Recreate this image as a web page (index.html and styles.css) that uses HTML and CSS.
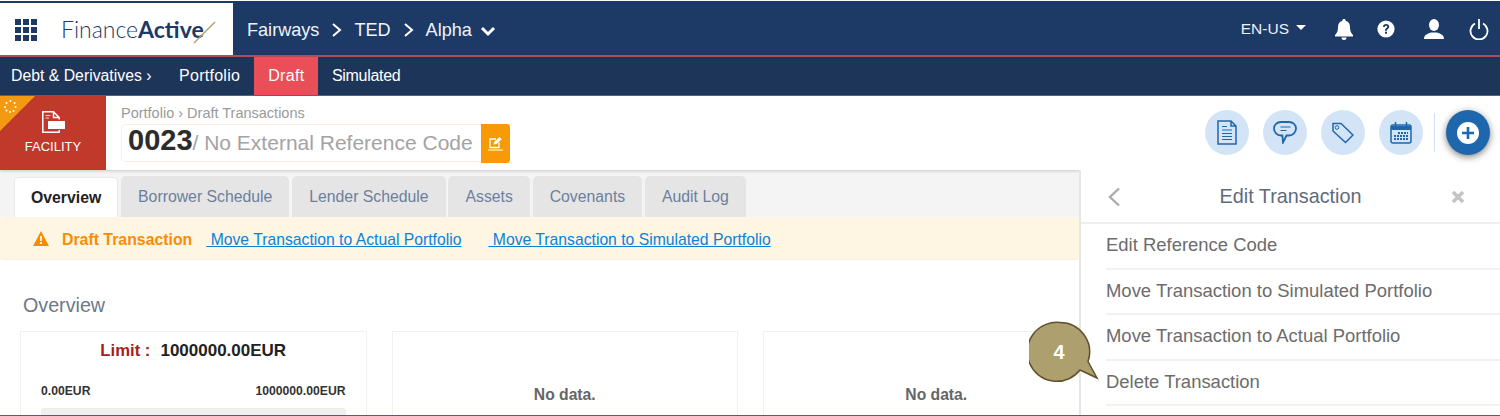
FILE: index.html
```html
<!DOCTYPE html>
<html lang="en">
<head>
<meta charset="utf-8">
<title>Edit Transaction</title>
<link rel="stylesheet" href="styles.css">
</head>
<body>
<div class="page">
  <header class="topbar">
    <div class="brand">
      <svg class="grid-icon" width="22" height="22" viewBox="0 0 22 22"><g fill="#1d3966"><rect x="0" y="0" width="6" height="6"/><rect x="8" y="0" width="6" height="6"/><rect x="16" y="0" width="6" height="6"/><rect x="0" y="8" width="6" height="6"/><rect x="8" y="8" width="6" height="6"/><rect x="16" y="8" width="6" height="6"/><rect x="0" y="16" width="6" height="6"/><rect x="8" y="16" width="6" height="6"/><rect x="16" y="16" width="6" height="6"/></g></svg>
      <div class="logo"><span class="logo-light">Finance</span><span class="logo-bold">Active</span><svg class="logo-slash" width="23" height="23" viewBox="0 0 23 23"><path d="M1 22 L22 1" stroke="#b3a26f" stroke-width="1.4" fill="none"/></svg></div>
    </div>
    <nav class="crumbs">
      <span>Fairways</span>
      <svg class="chev" width="11" height="16" viewBox="0 0 11 16"><path d="M2 2l7 6-7 6" fill="none" stroke="#fff" stroke-width="2"/></svg>
      <span>TED</span>
      <svg class="chev" width="11" height="16" viewBox="0 0 11 16"><path d="M2 2l7 6-7 6" fill="none" stroke="#fff" stroke-width="2"/></svg>
      <span>Alpha</span>
      <svg class="chev-down" width="16" height="11" viewBox="0 0 16 11"><path d="M2 2l6 6 6-6" fill="none" stroke="#fff" stroke-width="3"/></svg>
    </nav>
    <div class="top-actions">
      <span class="lang">EN-US</span>
      <svg class="caret" width="10" height="5" viewBox="0 0 10 5"><path d="M0 0h10L5 5z" fill="#fff"/></svg>
      <svg class="ta bell" width="20" height="21" viewBox="0 0 20 21"><path d="M10 0c1 0 1.700.7 1.700 1.700 3 .8 4.300 3.300 4.300 6.300 0 4 1 6 3 8v1.500H1V16c2-2 3-4 3-8 0-3 1.300-5.500 4.300-6.300C8.300.7 9 0 10 0z M7.500 18.500h5a2.500 2.500 0 0 1-5 0z" fill="#fff"/></svg>
      <svg class="ta help" width="18" height="18" viewBox="0 0 18 18"><circle cx="9" cy="9" r="8.600" fill="#fff"/><path d="M6 7c0-2 1.300-3 3.100-3S12.200 5 12.200 6.700c0 2.200-2.400 2.300-2.400 4H8v-.5c0-2.200 2.200-2.300 2.200-3.500 0-.6-.4-1-1.100-1-.7 0-1.200.4-1.200 1.300z" fill="#1d3966"/><rect x="8" y="11.700" width="2" height="2" fill="#1d3966"/></svg>
      <svg class="ta user" width="20" height="20" viewBox="0 0 20 20"><ellipse cx="10" cy="6" rx="5" ry="6" fill="#fff"/><path d="M0 20c0-4 3-5 7-6.500h6C17 15 20 16 20 20z" fill="#fff"/></svg>
      <svg class="ta power" width="20" height="21" viewBox="0 0 20 21"><path d="M6 4.500a8.500 8.500 0 1 0 8 0" fill="none" stroke="#fff" stroke-width="1.800"/><path d="M10 0v10" stroke="#fff" stroke-width="1.800"/></svg>
    </div>
  </header>

  <nav class="subnav">
    <span class="sub-root">Debt &amp; Derivatives &rsaquo;</span>
    <span class="sub-item sub-portfolio">Portfolio</span>
    <span class="sub-item sub-active">Draft</span>
    <span class="sub-item sub-simulated">Simulated</span>
  </nav>

  <section class="head">
    <div class="badge">
      <svg class="corner" width="35" height="35" viewBox="0 0 35 35"><path d="M0 0h35L0 35z" fill="#f49a12"/><g fill="#fff"><circle cx="10.500" cy="5" r="1"/><circle cx="14.500" cy="7" r="1"/><circle cx="15.500" cy="11" r="1"/><circle cx="13.500" cy="15" r="1"/><circle cx="10" cy="16" r="1"/><circle cx="6.500" cy="14.500" r="1"/><circle cx="5" cy="11" r="1"/><circle cx="6.500" cy="7" r="1"/></g></svg>
      <svg class="badge-icon" width="24" height="24" viewBox="0 0 24 24"><path d="M1.800 1.800h10.700l5.700 5.700v14.700H1.800z M12.500 1.800v5.700h5.700" fill="none" stroke="#fff" stroke-width="1.500"/><path d="M4.500 5.500h5M4.500 8h3.500" stroke="#fff" stroke-width=".8"/><rect x="5.500" y="9.500" width="18.500" height="10.500" fill="#c0392b"/><rect x="7" y="11" width="17" height="8" fill="#fff"/></svg>
      <span class="badge-label">FACILITY</span>
    </div>
    <div class="head-main">
      <div class="breadcrumb">Portfolio &rsaquo; Draft Transactions</div>
      <div class="ref-row">
        <div class="ref-box"><b class="ref-num">0023</b><span class="ref-text">/ No External Reference Code</span></div>
        <div class="ref-edit"><svg width="15" height="15" viewBox="0 0 15 15"><path d="M11 6.500V11.500H2V3h6" fill="none" stroke="#fff" stroke-width="1.300"/><path d="M5.500 8.500l.6-2.500L11.500 1 13.800 3.200 8.500 8z" fill="#fff"/><path d="M0 14h15" stroke="#fff" stroke-width="1"/></svg></div>
      </div>
    </div>
    <div class="head-actions">
      <span class="round"><svg width="20" height="25" viewBox="0 0 20 25"><path d="M1 1h13l5 5v18H1z M14 1v5h5" fill="none" stroke="#1e67ad" stroke-width="1.500"/><path d="M5 10h10M5 13.500h10M5 16.500h10M5 19.500h10M5 6.500h5" stroke="#1e67ad" stroke-width="1.200"/></svg></span>
      <span class="round"><svg width="24" height="23" viewBox="0 0 24 23"><path d="M8 1h8c4 0 7 2.800 7 6.500S20 14.500 16 14.500h-2.500L10 21.500l-.6-7H8c-4 0-7-3.300-7-7S4 1 8 1z" fill="none" stroke="#1e67ad" stroke-width="1.800"/><path d="M7.500 6h10M7.500 9.500h6" stroke="#1e67ad" stroke-width="1.200"/></svg></span>
      <span class="round"><svg width="22" height="22" viewBox="0 0 22 22"><path d="M1 1.500h8L21 13l-7.500 7.500L1 9z" fill="none" stroke="#1e67ad" stroke-width="1.500"/><circle cx="5" cy="5.500" r="1.800" fill="none" stroke="#1e67ad" stroke-width="1"/></svg></span>
      <span class="round"><svg width="22" height="22" viewBox="0 0 22 22"><rect x="1" y="3" width="20" height="18" rx="2" fill="none" stroke="#1e67ad" stroke-width="1.500"/><path d="M1 4h20v4H1z" fill="#1e67ad"/><path d="M5.500 0v5M16.500 0v5" stroke="#1e67ad" stroke-width="1.500"/><path d="M8 11h10M4 14h14M4 17h14" stroke="#1e67ad" stroke-width="2" stroke-dasharray="2 1"/></svg></span>
      <span class="divider"></span>
      <span class="plus"><svg width="22" height="22" viewBox="0 0 22 22"><circle cx="11" cy="11" r="11" fill="#fff"/><path d="M11 5v12M5 11h12" stroke="#1e67ad" stroke-width="2.600"/></svg></span>
    </div>
  </section>

  <div class="body">
    <main class="content">
      <div class="tabs">
        <span class="tab tab-active">Overview</span>
        <span class="tab">Borrower Schedule</span>
        <span class="tab">Lender Schedule</span>
        <span class="tab">Assets</span>
        <span class="tab">Covenants</span>
        <span class="tab">Audit Log</span>
      </div>
      <div class="alert">
        <svg class="warn" width="16" height="15" viewBox="0 0 16 15"><path d="M8 0l8 15H0z" fill="#fb8c00"/><rect x="7" y="5" width="2" height="5" fill="#fff7e6"/><rect x="7" y="11" width="2" height="2" fill="#fff7e6"/></svg>
        <b class="alert-title">Draft Transaction</b>
        <a class="alert-link" href="#">&nbsp;Move Transaction to Actual Portfolio</a>
        <a class="alert-link" href="#">&nbsp;Move Transaction to Simulated Portfolio</a>
      </div>
      <h2 class="section-title">Overview</h2>
      <div class="cards">
        <div class="card">
          <div class="limit"><span class="limit-label">Limit :</span><b>1000000.00EUR</b></div>
          <div class="limit-range"><span>0.00EUR</span><span>1000000.00EUR</span></div>
          <div class="bar"></div>
        </div>
        <div class="card card-empty">No data.</div>
        <div class="card card-empty">No data.</div>
      </div>
    </main>
    <aside class="panel">
      <div class="panel-head">
        <svg width="13" height="20" viewBox="0 0 13 20"><path d="M11 1.500L2 10l9 8.500" fill="none" stroke="#a9acb0" stroke-width="2.400"/></svg>
        <span class="panel-title">Edit Transaction</span>
        <svg width="14" height="14" viewBox="0 0 14 14"><path d="M2 2l10 10M12 2L2 12" stroke="#c4c4c4" stroke-width="3.600"/></svg>
      </div>
      <ul class="panel-list">
        <li>Edit Reference Code</li>
        <li>Move Transaction to Simulated Portfolio</li>
        <li>Move Transaction to Actual Portfolio</li>
        <li>Delete Transaction</li>
      </ul>
    </aside>
  </div>

  <div class="callout">
    <svg width="72" height="64" viewBox="0 0 72 64"><path d="M31 1.500a29.500 29.500 0 0 1 28 39l9 16.500-17-8A29.500 29.500 0 1 1 31 1.500z" fill="#ae9f6e" stroke="#5e522d" stroke-width="1.500"/></svg>
    <span class="callout-num">4</span>
  </div>
  <div class="bottom-line"></div>
</div>
</body>
</html>
```
FILE: styles.css
```css
* { box-sizing: border-box; }
html, body { margin: 0; padding: 0; height: 100%; overflow: hidden; background: #fff; }
body { font-family: "Liberation Sans", Arial, sans-serif; }
.page { position: relative; width: 1500px; height: 416px; overflow: hidden; display: flex; flex-direction: column; }

.topbar { height: 56px; margin-top: 1px; flex: none; display: flex; align-items: stretch; background: #1d3966; border-top: 2px solid #1d3966; border-bottom: 2px solid #b04c5c; color: #fff; }
.brand { width: 233px; background: #fff; display: flex; align-items: center; padding-left: 15px; flex: none; }
.grid-icon { flex: none; margin-top: 1px; }
.logo { margin-left: 24px; display: flex; align-items: center; font-family: Lato, "Liberation Sans", sans-serif; font-size: 23px; color: #1d3966; white-space: nowrap; }
.logo-light { font-weight: 300; }
.logo-bold { font-weight: 700; }
.logo-slash { margin-left: -11px; margin-top: 6px; }
.crumbs { display: flex; align-items: center; gap: 12px; margin-left: 14px; padding-top: 2px; font-size: 18.100px; color: #f0f3f7; }
.chev-down { margin-left: -4px; margin-top: 3px; }
.top-actions { margin-left: auto; display: flex; align-items: center; padding-right: 11px; }
.lang { font-size: 15.500px; color: #eef1f5; }
.caret { margin-left: 7px; margin-bottom: 3px; }
.ta { display: block; }
.bell { margin-left: 28px; }
.help { margin-left: 23px; }
.user { margin-left: 29px; }
.power { margin-left: 25px; }

.subnav { height: 39px; flex: none; display: flex; align-items: stretch; background: #1d3559; color: #fff; font-size: 16px; border-bottom: 1px solid #54698a; }
.sub-root { display: flex; align-items: center; padding-left: 11px; width: 165px; font-size: 15.800px; }
.sub-item { display: flex; align-items: center; padding: 0 14px; }
.sub-portfolio { letter-spacing: .28px; }
.sub-active { background: #ea4e58; letter-spacing: .3px; }
.sub-simulated { letter-spacing: -.3px; padding-left: 13.500px; }

.head { height: 74px; flex: none; display: flex; background: #fff; position: relative; z-index: 1; box-shadow: 0 1px 3px rgba(0,0,0,.18); }
.badge { width: 106px; flex: none; background: #c0392b; position: relative; display: flex; flex-direction: column; align-items: center; color: #fff; padding-top: 14px; }
.corner { position: absolute; left: 0; top: 0; }
.badge-label { font-size: 13px; margin-top: 5px; }
.head-main { margin-left: 15px; padding-top: 9px; }
.breadcrumb { font-size: 14.500px; color: #9a9a9a; line-height: 16px; }
.ref-row { display: flex; align-items: flex-start; margin-top: 3px; }
.ref-box { width: 360px; height: 38px; border: 1px solid #f6f1e2; border-right: 0; border-radius: 5px 0 0 5px; padding: 0 0 5px 6px; display: flex; align-items: center; white-space: nowrap; }
.ref-num { font-size: 29px; color: #2c2c2c; }
.ref-text { font-size: 21px; color: #a3a3a3; margin-top: 4px; }
.ref-edit { width: 29px; height: 39px; background: #f89a06; border-radius: 0 3px 3px 0; display: flex; align-items: center; justify-content: center; }
.head-actions { margin-left: auto; display: flex; align-items: center; padding-right: 10px; padding-bottom: 1px; }
.round { width: 44px; height: 45px; border-radius: 50%; background: #d4e4f7; display: flex; align-items: center; justify-content: center; margin-left: 14px; }
.divider { width: 1px; height: 39px; background: #d3e0f0; margin-left: 11px; }
.plus { width: 44px; height: 45px; border-radius: 50%; background: #1e67ad; display: flex; align-items: center; justify-content: center; margin-left: 11px; box-shadow: 0 2px 7px rgba(0,0,0,.5); }

.body { flex: 1; min-height: 0; display: flex; }
.content { flex: 1; min-width: 0; background: #fff; overflow: hidden; }
.tabs { height: 47px; background: #f4f4f4; display: flex; align-items: flex-end; padding-left: 14px; gap: 2.800px; font-size: 15.800px; }
.tab { height: 41px; padding: 0 17px; background: #e5e5e5; color: #6d7f9c; display: flex; align-items: center; border-radius: 5px 5px 0 0; }
.tab-active { height: 40px; background: #fff; color: #222; font-weight: 700; padding: 0 16px; border: 1px solid #e8e8e8; border-bottom: 0; }
.alert { height: 43px; background: #fef6e3; display: flex; align-items: center; padding: 3px 0 0 33px; font-size: 15.730px; border-bottom: 1px solid #f6f0e0; border-radius: 3px; white-space: nowrap; }
.warn { margin-top: -3px; }
.alert-title { color: #fb8c00; margin-left: 13px; font-size: 15.850px; }
.alert-link { color: #0a82d8; text-decoration: underline; margin-left: 14px; }
.alert-link + .alert-link { margin-left: 27px; }
.section-title { margin: 33px 0 0 23px; font-size: 19.700px; line-height: 24px; font-weight: 400; color: #6d7888; }
.cards { display: flex; gap: 25px; margin: 14px 0 0 20px; }
.card { width: 346.500px; height: 110px; flex: none; border: 1px solid #f1f1f1; }
.limit { text-align: center; font-size: 17px; line-height: 20px; padding-top: 9px; color: #222; }
.limit-label { color: #a3211d; font-weight: 700; margin-right: 10px; font-size: 16.700px; }
.limit-range { display: flex; justify-content: space-between; padding: 0 20px; margin-top: 22px; font-size: 12.200px; font-weight: 700; color: #333; line-height: 16px; }
.bar { height: 20px; background: #f0f0f0; margin: 9px 20px 0; border-radius: 3px; border: 1px solid #ebebeb; }
.card-empty { display: flex; justify-content: center; padding-top: 54px; font-size: 15.700px; font-weight: 700; color: #666; }

.panel { width: 421px; flex: none; background: #fff; border-left: 2px solid #e6e6e6; position: relative; z-index: 2; }
.panel-head { height: 54px; border-bottom: 2px solid #eee; display: flex; align-items: center; justify-content: space-between; padding: 1px 35px 0 27px; }
.panel-title { font-size: 19.800px; color: #5f6b7a; margin-left: 9px; }
.panel-list { list-style: none; margin: 0; padding: 0 0 0 25px; }
.panel-list li { height: 45.500px; display: flex; align-items: center; border-bottom: 2px solid #f1f1f1; font-size: 18.470px; color: #6c6c6c; padding-bottom: 1.500px; }

.callout { position: absolute; left: 1029px; top: 321px; width: 72px; height: 64px; z-index: 3; }
.callout svg { display: block; }
.callout-num { position: absolute; left: 24.500px; top: 20.500px; color: #fff; font-size: 20px; font-weight: 700; line-height: 20px; }
.bottom-line { position: absolute; left: 0; right: 0; bottom: 0; height: 1px; background: #565e70; z-index: 4; }
```
